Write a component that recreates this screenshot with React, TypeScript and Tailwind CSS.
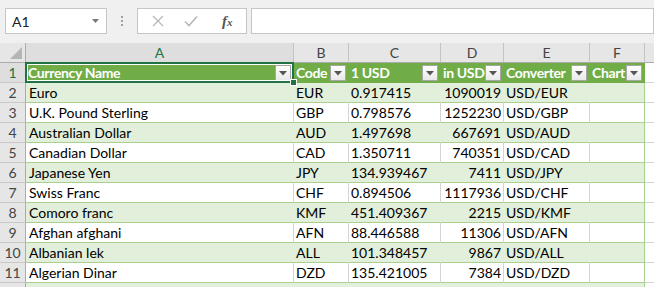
import React from "react";

const rows: [string, string, string, string, string][] = [
  ["Euro", "EUR", "0.917415", "1090019", "USD/EUR"],
  ["U.K. Pound Sterling", "GBP", "0.798576", "1252230", "USD/GBP"],
  ["Australian Dollar", "AUD", "1.497698", "667691", "USD/AUD"],
  ["Canadian Dollar", "CAD", "1.350711", "740351", "USD/CAD"],
  ["Japanese Yen", "JPY", "134.939467", "7411", "USD/JPY"],
  ["Swiss Franc", "CHF", "0.894506", "1117936", "USD/CHF"],
  ["Comoro franc", "KMF", "451.409367", "2215", "USD/KMF"],
  ["Afghan afghani", "AFN", "88.446588", "11306", "USD/AFN"],
  ["Albanian lek", "ALL", "101.348457", "9867", "USD/ALL"],
  ["Algerian Dinar", "DZD", "135.421005", "7384", "USD/DZD"],
];

const GRID = "grid grid-cols-[26px_268px_55px_92px_63px_86px_55px_1fr]";

function FilterBtn() {
  return (
    <div className="absolute z-[5] right-[2px] top-[2px] w-[16px] h-[16px] border border-[#a6a6a6] bg-gradient-to-b from-white to-[#e9e9e9] flex items-center justify-center">
      <svg width="8" height="5" viewBox="0 0 8 5">
        <path d="M0 0 H8 L4 4.5 Z" fill="#555" />
      </svg>
    </div>
  );
}

function HeaderCell({
  label,
  children,
}: {
  label: string;
  children?: React.ReactNode;
}) {
  return (
    <div className="relative h-[20px] bg-[#70AD47] border-b border-b-[#70AD47] border-r border-r-[#70AD47] pl-[2px] text-white font-bold tracking-[-0.35px] leading-[19px] whitespace-nowrap">
      {label}
      <FilterBtn />
      {children}
    </div>
  );
}

export default function App() {
  return (
    <div
      className="w-[654px] h-[287px] overflow-hidden bg-white text-[14px] text-black"
      style={{ fontFamily: "Lato, 'Open Sans', sans-serif" }}
    >
      {/* Formula bar */}
      <div className="h-[43px] bg-[#f0f0f0] flex items-start pt-[8px] pl-[5px]">
        <div className="w-[102px] h-[26px] bg-white border border-[#c6c6c6] flex items-center justify-between pl-[6px] pr-[7px]">
          <span className="text-[14px] text-[#222]">A1</span>
          <svg width="7" height="4" viewBox="0 0 7 4">
            <path d="M0 0 H7 L3.5 4 Z" fill="#777" />
          </svg>
        </div>
        <div className="w-[30px] h-[26px] flex flex-col items-center justify-center gap-[2px]">
          <div className="w-[2px] h-[2px] bg-[#a0a0a0]" />
          <div className="w-[2px] h-[2px] bg-[#a0a0a0]" />
          <div className="w-[2px] h-[2px] bg-[#a0a0a0]" />
        </div>
        <div className="w-[110px] h-[26px] bg-white border border-[#c6c6c6] flex items-center pl-[14px] gap-[20px]">
          <svg width="12" height="12" viewBox="0 0 12 12">
            <path d="M1 1 L11 11 M11 1 L1 11" stroke="#b8b8b8" strokeWidth="1.3" />
          </svg>
          <svg width="14" height="12" viewBox="0 0 14 12">
            <path d="M1 6.5 L5 10.5 L13 1.5" stroke="#b8b8b8" strokeWidth="1.6" fill="none" />
          </svg>
          <span
            className="ml-[4px] text-[15px] italic font-bold text-[#555]"
            style={{ fontFamily: "'Liberation Serif', serif" }}
          >
            f<span className="text-[11px]">x</span>
          </span>
        </div>
        <div className="ml-[4px] flex-1 h-[26px] bg-white border border-[#c6c6c6]" />
      </div>

      {/* Column headers */}
      <div className={`${GRID} h-[20px] bg-[#e6e6e6] text-[#444]`}>
        <div className="relative border-r border-r-[#ababab] border-b border-b-[#ababab]">
          <svg className="absolute right-[3px] bottom-[3px]" width="12" height="12" viewBox="0 0 12 12">
            <path d="M12 0 V12 H0 Z" fill="#b5b5b5" />
          </svg>
        </div>
        {["A", "B", "C", "D", "E", "F"].map((l, i) => (
          <div
            key={l}
            className={`border-r border-r-[#c4c4c4] border-b border-b-[#ababab] text-center leading-[19px] ${
              i === 0 ? "bg-[#dedede] text-[#217346]" : ""
            }`}
          >
            {l}
          </div>
        ))}
        <div className="border-b border-b-[#ababab]" />
      </div>

      {/* Row 1: table header */}
      <div className={`${GRID} h-[20px]`}>
        <div className="bg-[#dedede] border-r border-r-[#ababab] border-b border-b-[#c8c8c8] text-center leading-[19px] text-[#217346]">
          1
        </div>
        <HeaderCell label="Currency Name">
          <div className="absolute top-[-1px] left-[-1px] right-[-1px] bottom-[-1px] border-2 border-[#217346] shadow-[inset_0_0_0_1px_#ffffff] z-10 pointer-events-none">
            <div className="absolute right-[-5px] bottom-[-5px] w-[7px] h-[7px] bg-[#217346] border border-white" />
          </div>
        </HeaderCell>
        <HeaderCell label="Code" />
        <HeaderCell label="1 USD" />
        <HeaderCell label="in USD" />
        <HeaderCell label="Converter" />
        <HeaderCell label="Chart" />
        <div className="border-b border-b-[#d4d4d4]" />
      </div>

      {/* Data rows */}
      {rows.map((r, idx) => {
        const green = idx % 2 === 0;
        const bg = green ? "bg-[#E2EFDA]" : "bg-white";
        const br = green ? "border-r-[#E2EFDA]" : "border-r-[#d4d4d4]";
        const cell = `h-[20px] ${bg} border-r ${br} border-b border-b-[#A9D08E] leading-[19px] whitespace-nowrap overflow-hidden`;
        return (
          <div key={idx} className={`${GRID} h-[20px]`}>
            <div className="bg-[#e6e6e6] border-r border-r-[#ababab] border-b border-b-[#c8c8c8] text-center leading-[19px] text-[#444]">
              {idx + 2}
            </div>
            <div className={`${cell} pl-[3px]`}>{r[0]}</div>
            <div className={`${cell} pl-[2px]`}>{r[1]}</div>
            <div className={`${cell} pl-[2px]`}>{r[2]}</div>
            <div className={`${cell} pr-[2px] text-right`}>{r[3]}</div>
            <div className={`${cell} pl-[2px]`}>{r[4]}</div>
            <div className={`h-[20px] ${bg} border-r border-r-[#A9D08E] border-b border-b-[#A9D08E]`} />
            <div className="border-b border-b-[#d4d4d4]" />
          </div>
        );
      })}

      {/* Row 12 partial */}
      <div className={`${GRID} h-[20px]`}>
        <div className="bg-[#e6e6e6] border-r border-r-[#ababab]" />
        <div className="bg-[#E2EFDA]" />
        <div className="bg-[#E2EFDA]" />
        <div className="bg-[#E2EFDA]" />
        <div className="bg-[#E2EFDA]" />
        <div className="bg-[#E2EFDA]" />
        <div className="bg-[#E2EFDA] border-r border-r-[#A9D08E]" />
        <div />
      </div>
    </div>
  );
}
